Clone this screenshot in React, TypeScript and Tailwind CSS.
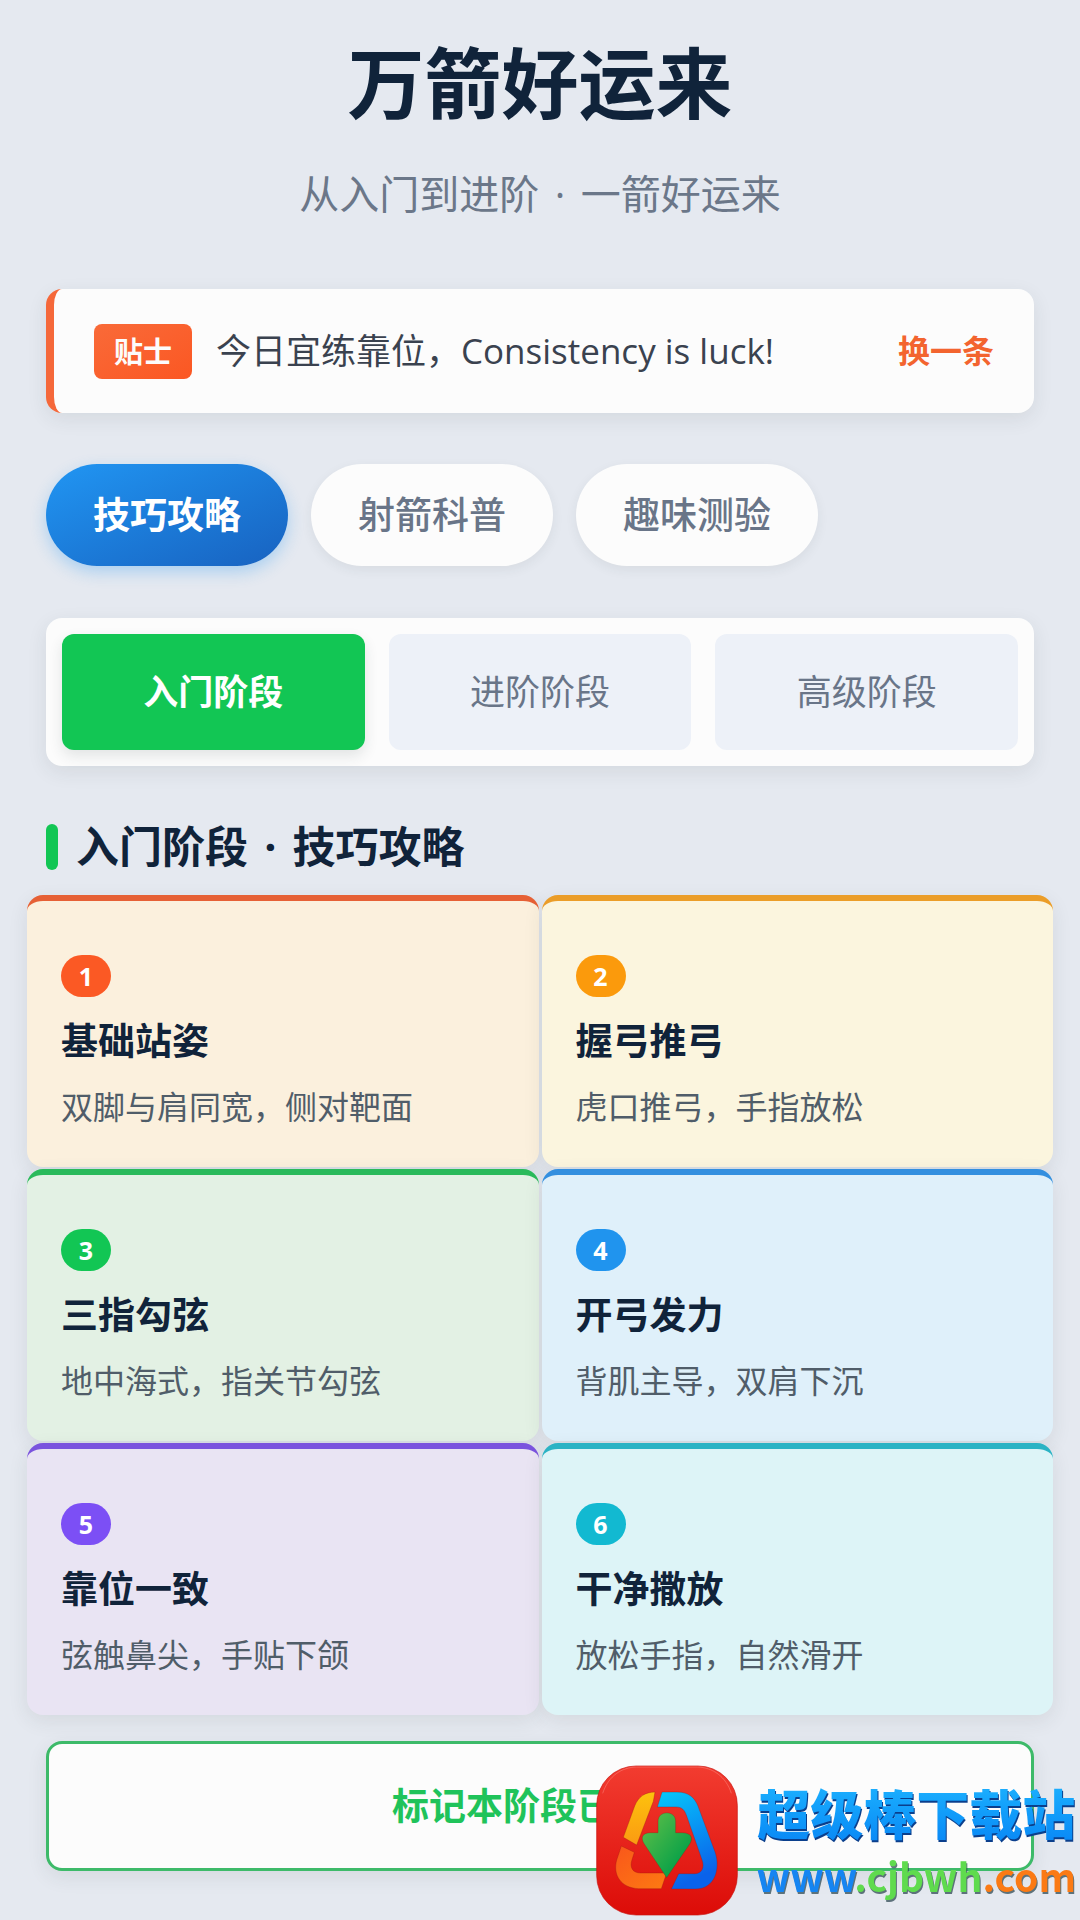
import { useState } from "react";
import clsx from "clsx";

const tabs = ["技巧攻略", "射箭科普", "趣味测验"];

const stages = ["入门阶段", "进阶阶段", "高级阶段"];

const tips = ["今日宜练靠位，Consistency is luck!", "今日宜练撒放，Relax and release!"];

const cards = [
  { title: "基础站姿", desc: "双脚与肩同宽，侧对靶面", card: "border-[#e66035] bg-[#fbf0dd]", badge: "bg-[#fb5924]" },
  { title: "握弓推弓", desc: "虎口推弓，手指放松", card: "border-[#eb9d28] bg-[#fbf5de]", badge: "bg-[#fb9a0c]" },
  { title: "三指勾弦", desc: "地中海式，指关节勾弦", card: "border-[#2aba5b] bg-[#e3f1e4]", badge: "bg-[#12c654]" },
  { title: "开弓发力", desc: "背肌主导，双肩下沉", card: "border-[#338fdf] bg-[#dff0fa]", badge: "bg-[#2094ee]" },
  { title: "靠位一致", desc: "弦触鼻尖，手贴下颌", card: "border-[#7a53de] bg-[#e9e4f3]", badge: "bg-[#7c4ff5]" },
  { title: "干净撒放", desc: "放松手指，自然滑开", card: "border-[#2bb3c4] bg-[#ddf4f7]", badge: "bg-[#12b9d1]" },
];

function SiteLogo() {
  return (
    <svg viewBox="0 0 426 451" className="h-[151px] w-[142px] shrink-0" aria-hidden="true">
      <defs>
        <linearGradient id="tile" x1="0" y1="0" x2="0" y2="1">
          <stop offset="0" stopColor="#f23c30" />
          <stop offset="1" stopColor="#dc0c08" />
        </linearGradient>
        <linearGradient id="yellow" x1="0" y1="0" x2="0" y2="1">
          <stop offset="0" stopColor="#fdc20d" />
          <stop offset="1" stopColor="#fb9a12" />
        </linearGradient>
        <linearGradient id="blue" x1="0" y1="0" x2="0.3" y2="1">
          <stop offset="0" stopColor="#06c8fb" />
          <stop offset="1" stopColor="#0a62ea" />
        </linearGradient>
        <linearGradient id="orange" x1="0" y1="0" x2="1" y2="1">
          <stop offset="0" stopColor="#f9571b" />
          <stop offset="1" stopColor="#fd7a12" />
        </linearGradient>
        <linearGradient id="green" x1="0" y1="0" x2="1" y2="1">
          <stop offset="0.2" stopColor="#4cb848" />
          <stop offset="0.8" stopColor="#06a048" />
        </linearGradient>
      </defs>
      <rect x="2" y="2" width="422" height="447" rx="118" fill="url(#tile)" stroke="#c9120e" strokeWidth="2" />
      <path d="M20 84C38 30 78 6 122 5H304C350 6 390 34 406 84" fill="none" stroke="#ff8f86" strokeWidth="2" strokeOpacity="0.7" />
      <g stroke="#9c1410" strokeOpacity="0.5" strokeWidth="2">
        <path d="M177 80C148 81 128 92 116 122L82 216L122 239L172 108Z" fill="url(#yellow)" />
        <path
          d="M198 80H242C280 80 296 98 306 122L358 262C374 312 356 371 298 371H226L248 325H296C318 325 326 306 318 284L272 152C266 134 258 125 240 125H184Z"
          fill="url(#blue)"
        />
        <path
          d="M76 242L115 261L108 283C100 306 110 323 134 323H212L196 370H128C74 368 50 328 62 284Z"
          fill="url(#orange)"
        />
        <path
          d="M186 168C186 134 239 134 239 168V202H258C286 202 294 218 280 238L212 337L146 238C132 218 138 202 164 202H186Z"
          fill="url(#green)"
        />
      </g>
    </svg>
  );
}

function Dot() {
  return <span className="mx-[5px]"> · </span>;
}

export default function App() {
  const [tab, setTab] = useState(0);
  const [stage, setStage] = useState(0);
  const [tip, setTip] = useState(0);

  return (
    <main className="relative min-h-screen bg-[#e5e9f0] px-[46px] pt-[34px] pb-12 font-['Open_Sans','Noto_Sans_CJK_SC',sans-serif] text-[#10233a]">
      {/* Header */}
      <header className="text-center">
        <h1 className="text-[77px] leading-[100px] font-bold">万箭好运来</h1>
        <p className="mt-[30px] text-[40px] leading-[60px] text-[#6b7789]">
          从入门到进阶
          <Dot />
          一箭好运来
        </p>
      </header>

      {/* Daily tip */}
      <section className="mt-[65px] flex h-[124px] items-center gap-6 rounded-2xl border-l-8 border-[#f5683a] bg-[#fcfcfc] pr-10 pl-10 shadow-[0_6px_20px_rgba(40,60,60,0.09)]">
        <span className="rounded-lg bg-linear-to-br from-[#f96a38] to-[#fb5722] px-5 text-[29px] leading-[55px] font-bold text-[#fcfcfc]">
          贴士
        </span>
        <p className="flex-1 text-[35px] leading-[50px] text-[#3a424f]">{tips[tip]}</p>
        <button
          type="button"
          onClick={() => setTip((tip + 1) % tips.length)}
          className="text-[32px] leading-[50px] font-bold text-[#f3642f]"
        >
          换一条
        </button>
      </section>

      {/* Categories */}
      <nav className="mt-[51px] flex gap-[23px]">
        {tabs.map((name, i) => (
          <button
            key={name}
            type="button"
            onClick={() => setTab(i)}
            className={clsx(
              "h-[102px] rounded-full px-[47px] text-[37px]",
              i === tab
                ? "bg-linear-to-br from-[#2196f3] to-[#1862c0] font-bold text-white shadow-[0_6px_16px_rgba(33,150,243,0.3)]"
                : "bg-[#fcfcfc] font-medium text-[#697588] shadow-[0_4px_12px_rgba(40,60,60,0.07)]"
            )}
          >
            {name}
          </button>
        ))}
      </nav>

      {/* Stage switch */}
      <section className="mt-[52px] grid grid-cols-3 gap-6 rounded-2xl bg-[#fcfcfc] p-4 shadow-[0_6px_20px_rgba(40,60,60,0.09)]">
        {stages.map((name, i) => (
          <button
            key={name}
            type="button"
            onClick={() => setStage(i)}
            className={clsx(
              "h-[116px] rounded-xl text-[35px]",
              i === stage
                ? "bg-[#12c654] font-bold text-white shadow-[0_6px_14px_rgba(40,60,60,0.12)]"
                : "bg-[#edf1f8] text-[#697588]"
            )}
          >
            {name}
          </button>
        ))}
      </section>

      {/* Skill cards */}
      <h2 className="mt-[51px] flex items-center gap-[18px] text-[43px] leading-[60px] font-bold">
        <span className="h-[46px] w-3 rounded-md bg-[#12c654]" />
        <span>
          {stages[stage]}
          <Dot />
          {tabs[tab]}
        </span>
      </h2>
      <ul className="-mx-[19px] mt-[18px] grid grid-cols-2 gap-x-[3px] gap-y-[2px]">
        {cards.map((item, i) => (
          <li
            key={item.title}
            className={clsx(
              "flex h-[272px] flex-col items-start rounded-2xl border-t-[6px] px-[34px] pt-[54px] shadow-[0_6px_20px_rgba(40,60,60,0.09)]",
              item.card
            )}
          >
            <span
              className={clsx("w-[50px] rounded-full text-center text-[25px] leading-[42px] font-bold text-white", item.badge)}
            >
              {i + 1}
            </span>
            <h3 className="mt-5 text-[37px] leading-[48px] font-bold">{item.title}</h3>
            <p className="mt-5 text-[32px] leading-[44px] text-[#505d69]">{item.desc}</p>
          </li>
        ))}
      </ul>

      <button
        type="button"
        className="mt-[26px] h-[130px] w-full rounded-2xl border-[3px] border-[#3dba69] bg-[#fcfcfc] text-[37px] font-bold text-[#1fc35a] shadow-[0_6px_20px_rgba(40,60,60,0.09)]"
      >
        标记本阶段已完成
      </button>

      {/* Download site mark, lies over the page corner */}
      <a href="#" className="absolute right-1 bottom-1 flex items-center gap-[18px] font-['Noto_Sans_CJK_SC',sans-serif] font-black">
        <SiteLogo />
        <span className="flex flex-col items-center whitespace-nowrap">
          <span className="bg-linear-to-b from-[#1fb4ff] to-[#0a86f5] bg-clip-text text-[53px] leading-[68px] text-transparent drop-shadow-[1px_2px_0_#0b3f8c]">
            超级棒下载站
          </span>
          <span className="text-[39px] leading-[58px] font-bold drop-shadow-[1px_2px_0_rgba(20,50,60,0.65)]">
            <span className="text-[#1585f2]">www</span>
            <span className="text-[#5fdb4e]">.cjbwh</span>
            <span className="text-[#fb7a14]">.com</span>
          </span>
        </span>
      </a>
    </main>
  );
}
